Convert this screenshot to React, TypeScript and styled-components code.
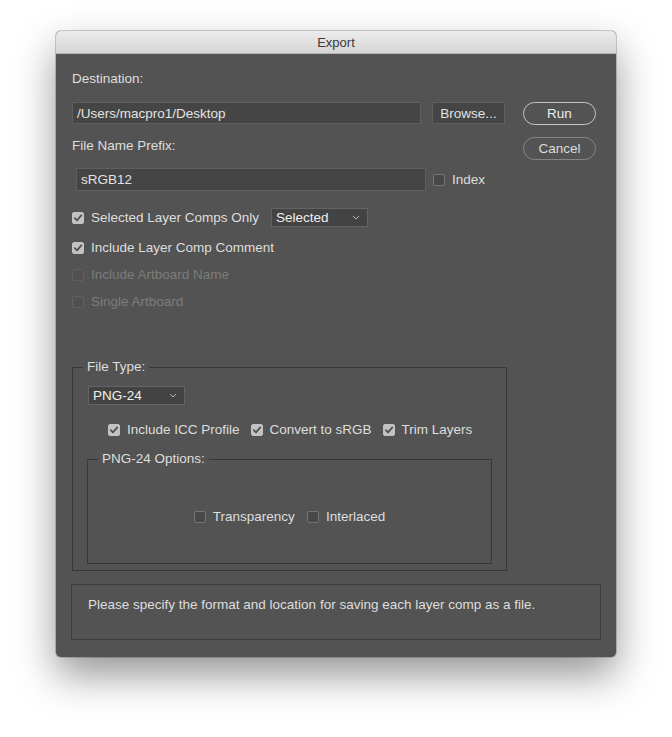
import React from 'react'
import styled, {createGlobalStyle, css} from 'styled-components'

const GlobalStyle = createGlobalStyle`
  html, body {
    margin: 0;
    background: #ffffff;
    font-family: "Liberation Sans", Arial, sans-serif;
    font-size: 13.5px;
  }
`

function Checkbox({
  label,
  checked = false,
  disabled = false
}: {
  label: string
  checked?: boolean
  disabled?: boolean
}) {
  return (
    <CheckLabel $disabled={disabled}>
      <Box $checked={checked} $disabled={disabled}>
        {checked && (
          <svg width="10" height="10" viewBox="0 0 10 10">
            <polyline
              points="1.8,5.2 4,7.4 8.3,2.4"
              fill="none"
              stroke="#4e4e4e"
              strokeWidth="1.7"
              strokeLinecap="round"
              strokeLinejoin="round"
            />
          </svg>
        )}
      </Box>
      {label}
    </CheckLabel>
  )
}

function Dropdown({value}: {value: string}) {
  return (
    <Select>
      <span>{value}</span>
      <svg width="8" height="5" viewBox="0 0 8 5">
        <polyline
          points="1,1 4,4 7,1"
          fill="none"
          stroke="#b8b8b8"
          strokeWidth="1"
        />
      </svg>
    </Select>
  )
}

export default function App() {
  return (
    <Page>
      <GlobalStyle />
      <Window>
        <TitleBar>Export</TitleBar>
        <Body>
          <Top>
            <Main>
              <Label>Destination:</Label>
              <FieldRow $top={16}>
                <TextField>/Users/macpro1/Desktop</TextField>
                <BrowseButton>Browse...</BrowseButton>
              </FieldRow>
              <Label $top={13}>File Name Prefix:</Label>
              <PrefixRow>
                <PrefixField>sRGB12</PrefixField>
                <Checkbox label="Index" />
              </PrefixRow>
              <Options>
                <OptionRow>
                  <Checkbox label="Selected Layer Comps Only" checked />
                  <Dropdown value="Selected" />
                </OptionRow>
                <OptionRow>
                  <Checkbox label="Include Layer Comp Comment" checked />
                </OptionRow>
                <OptionRow>
                  <Checkbox label="Include Artboard Name" disabled />
                </OptionRow>
                <OptionRow>
                  <Checkbox label="Single Artboard" disabled />
                </OptionRow>
              </Options>
            </Main>
            <ButtonColumn>
              <PillButton $primary>Run</PillButton>
              <PillButton>Cancel</PillButton>
            </ButtonColumn>
          </Top>

          <FileTypeGroup>
            <Legend>File Type:</Legend>
            <TypeSelectRow>
              <Dropdown value="PNG-24" />
            </TypeSelectRow>
            <TypeChecks>
              <Checkbox label="Include ICC Profile" checked />
              <Checkbox label="Convert to sRGB" checked />
              <Checkbox label="Trim Layers" checked />
            </TypeChecks>
            <OptionsGroup>
              <Legend>PNG-24 Options:</Legend>
              <PngChecks>
                <Checkbox label="Transparency" />
                <Checkbox label="Interlaced" />
              </PngChecks>
            </OptionsGroup>
          </FileTypeGroup>

          <Description>
            Please specify the format and location for saving each layer comp
            as a file.
          </Description>
        </Body>
      </Window>
    </Page>
  )
}

const Page = styled.div`
  padding: 31px 0 0 56px;
  height: 737px;
  box-sizing: border-box;
`

const Window = styled.div`
  width: 560px;
  border-radius: 5px;
  overflow: hidden;
  background: #535353;
  box-shadow: 0 18px 40px rgba(0, 0, 0, 0.42), 0 0 0 1px rgba(0, 0, 0, 0.18);
`

const TitleBar = styled.div`
  height: 23px;
  box-sizing: border-box;
  display: flex;
  align-items: center;
  justify-content: center;
  background: linear-gradient(#ececec, #d5d5d5);
  border-bottom: 1px solid #b3b3b3;
  color: #3a3a3a;
  font-size: 13px;
`

const Body = styled.div`
  display: flex;
  flex-direction: column;
  padding: 16px 15px 17px 16px;
  color: #dedede;
`

const Top = styled.div`
  display: flex;
`

const Main = styled.div`
  flex: 1;
  display: flex;
  flex-direction: column;
`

const Label = styled.div<{$top?: number}>`
  line-height: 16px;
  margin-top: ${(p) => p.$top ?? 0}px;
  padding-top: 1px;
`

const FieldRow = styled.div<{$top?: number}>`
  display: flex;
  gap: 11px;
  margin-top: ${(p) => (p.$top ?? 0) - 1}px;
`

const fieldStyle = css`
  box-sizing: border-box;
  display: flex;
  align-items: center;
  background: #454545;
  border: 1px solid #5f5f5f;
  color: #e2e2e2;
  padding: 0 4px;
  white-space: nowrap;
`

const TextField = styled.div`
  ${fieldStyle};
  flex: 1;
  height: 22px;
`

const BrowseButton = styled.div`
  ${fieldStyle};
  width: 73px;
  height: 22px;
  justify-content: center;
`

const PrefixRow = styled.div`
  display: flex;
  align-items: center;
  gap: 7px;
  margin: 14px 0 0 4px;
`

const PrefixField = styled.div`
  ${fieldStyle};
  width: 350px;
  height: 23px;
`

const Options = styled.div`
  display: flex;
  flex-direction: column;
  gap: 7px;
  margin-top: 15px;
`

const OptionRow = styled.div`
  display: flex;
  align-items: center;
  gap: 12px;
  min-height: 20px;

  &:first-child {
    min-height: 23px;
    margin-bottom: 2px;
  }
`

const CheckLabel = styled.label<{$disabled: boolean}>`
  display: inline-flex;
  align-items: center;
  gap: 7px;
  line-height: 16px;
  white-space: nowrap;
  color: ${(p) => (p.$disabled ? '#7c7c7c' : '#dedede')};
`

const Box = styled.span<{$checked: boolean; $disabled: boolean}>`
  box-sizing: border-box;
  width: 12px;
  height: 12px;
  border-radius: 2px;
  display: flex;
  align-items: center;
  justify-content: center;
  ${(p) =>
    p.$checked
      ? css`
          background: #c2c2c2;
          border: 1px solid #c2c2c2;
        `
      : p.$disabled
        ? css`
            background: #505050;
            border: 1px solid #606060;
          `
        : css`
            background: #484848;
            border: 1px solid #747474;
          `}
`

const Select = styled.div`
  box-sizing: border-box;
  width: 97px;
  height: 19px;
  display: flex;
  align-items: center;
  justify-content: space-between;
  padding: 0 7px 0 4px;
  background: #434343;
  border: 1px solid #646464;
  color: #efefef;
`

const ButtonColumn = styled.div`
  display: flex;
  flex-direction: column;
  gap: 12px;
  width: 73px;
  margin: 32px 5px 0 18px;
`

const PillButton = styled.div<{$primary?: boolean}>`
  box-sizing: border-box;
  height: 23px;
  border-radius: 12px;
  display: flex;
  align-items: center;
  justify-content: center;
  border: 1px solid ${(p) => (p.$primary ? '#c6c6c6' : '#858585')};
  color: ${(p) => (p.$primary ? '#ececec' : '#dcdcdc')};
`

const groupStyle = css`
  margin: 0;
  border: 1px solid #383838;
  min-width: 0;
`

const Legend = styled.legend`
  padding: 0 4px;
  line-height: 16px;
  color: #dedede;
`

const FileTypeGroup = styled.fieldset`
  ${groupStyle};
  width: 435px;
  box-sizing: border-box;
  margin-top: 47px;
  padding: 0 14px 6px 14px;

  & > ${Legend} {
    margin-left: -4px;
  }
`

const TypeSelectRow = styled.div`
  display: flex;
  margin: 11px 0 0 1px;
`

const TypeChecks = styled.div`
  display: flex;
  align-items: center;
  gap: 11px;
  min-height: 20px;
  margin: 15px 0 0 21px;
`

const OptionsGroup = styled.fieldset`
  ${groupStyle};
  padding: 0 10px 36px 10px;
  margin-top: 11px;
`

const PngChecks = styled.div`
  display: flex;
  justify-content: center;
  align-items: center;
  gap: 12px;
  min-height: 20px;
  margin-top: 40px;
`

const Description = styled.div`
  box-sizing: border-box;
  height: 56px;
  margin: 13px 0 0 -1px;
  padding: 12px 16px 0;
  border: 1px solid #3c3c3c;
  line-height: 16px;
  color: #dedede;
`
